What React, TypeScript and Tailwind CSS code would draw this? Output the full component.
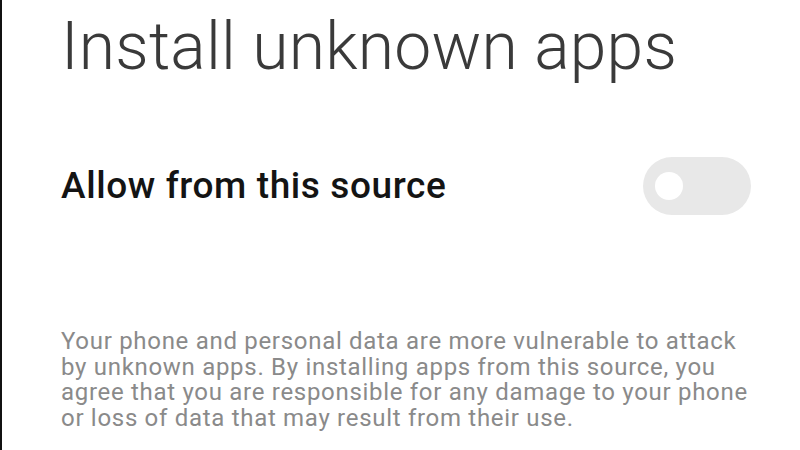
export default function App() {
  return (
    <div className="flex h-[450px] w-[800px] overflow-hidden bg-white font-['Roboto',_'Liberation_Sans',_sans-serif]">
      {/* window edge */}
      <div className="w-[2px] shrink-0 bg-[#111]" />

      <div className="flex flex-1 flex-col pl-[59px] pr-[49px] pt-[8px]">
        <h1 className="text-[66px] font-light leading-[78px] tracking-[0.2px] text-[#3a3a3a]">
          Install unknown apps
        </h1>

        <div className="mt-[71px] flex items-center justify-between">
          <span className="text-[37px] font-medium leading-[40px] tracking-[0.6px] text-[#141414]">
            Allow from this source
          </span>
          <button
            type="button"
            aria-pressed="false"
            className="flex h-[58px] w-[108px] items-center rounded-full bg-[#e8e8e8] pl-[12px]"
          >
            <span className="h-[28px] w-[28px] rounded-full bg-white" />
          </button>
        </div>

        <p className="mt-[114px] whitespace-nowrap text-[24px] leading-[25.7px] tracking-[0.7px] text-[#8a8a8a]">
          Your phone and personal data are more vulnerable to attack
          <br />
          by unknown apps. By installing apps from this source, you
          <br />
          agree that you are responsible for any damage to your phone
          <br />
          or loss of data that may result from their use.
        </p>
      </div>
    </div>
  )
}
